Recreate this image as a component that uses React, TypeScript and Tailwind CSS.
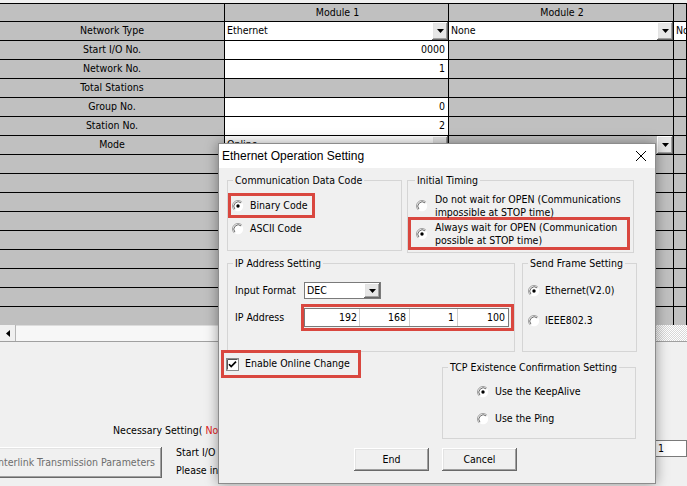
import React from 'react';

type CellData = { text?: string; white?: boolean; right?: boolean; drop?: boolean; center?: boolean };
type Row = { label: string; m1?: CellData; m2?: CellData; m3?: CellData };

const rows: Row[] = [
  {
    label: 'Network Type',
    m1: { text: 'Ethernet', white: true, drop: true },
    m2: { text: 'None', white: true, drop: true },
    m3: { text: 'None', white: true },
  },
  { label: 'Start I/O No.', m1: { text: '0000', white: true, right: true } },
  { label: 'Network No.', m1: { text: '1', white: true, right: true } },
  { label: 'Total Stations' },
  { label: 'Group No.', m1: { text: '0', white: true, right: true } },
  { label: 'Station No.', m1: { text: '2', white: true, right: true } },
  { label: 'Mode', m1: { text: 'Online', white: true, drop: true }, m2: { drop: true } },
  { label: '' },
  { label: '' },
  { label: '' },
  { label: '' },
  { label: '' },
  { label: '' },
  { label: '' },
  { label: '' },
  { label: '' },
];

const raised =
  'shadow-[inset_-1px_-1px_0_#696969,inset_1px_1px_0_#ffffff,inset_-2px_-2px_0_#a0a0a0,inset_2px_2px_0_#e3e3e3]';

const Arrow = () => (
  <svg width="7" height="4" viewBox="0 0 7 4">
    <path d="M0 0h7L3.5 4z" fill="#000" />
  </svg>
);

const DropBtn = () => (
  <span className={`flex h-full w-[16px] shrink-0 items-center justify-center bg-[#e6e6e6] ${raised}`}>
    <Arrow />
  </span>
);

const Radio = ({ on }: { on?: boolean }) => (
  <svg width="12" height="12" viewBox="0 0 12 12" className="shrink-0">
    <circle cx="6" cy="6" r="5.2" fill="#fff" />
    <path d="M2.1 9.9A5.5 5.5 0 0 1 9.9 2.1" fill="none" stroke="#a0a0a0" />
    <path d="M2.9 9.1A4.4 4.4 0 0 1 9.1 2.9" fill="none" stroke="#6b6b6b" />
    {on && <circle cx="6" cy="6" r="1.7" fill="#000" />}
  </svg>
);

const Check = () => (
  <svg width="13" height="13" viewBox="0 0 13 13" className="shrink-0">
    <rect x="0.5" y="0.5" width="12" height="12" fill="#fff" stroke="#8a8a8a" />
    <path d="M1.5 1.5v10M1.5 1.5h10" stroke="#555" />
    <path d="M3 6.2l2.2 2.4L10 3.6" fill="none" stroke="#000" strokeWidth="1.7" />
  </svg>
);

const Cell = ({ c, w }: { c?: CellData; w: string }) => (
  <div
    className={`flex h-full items-center overflow-hidden border-r border-black ${w} ${
      c?.white ? 'bg-white' : 'bg-[#c0c0c0]'
    }`}
  >
    <span
      className={`flex-1 whitespace-nowrap ${c?.right ? 'pr-[3px] text-right' : 'pl-[2px]'} ${
        c?.center ? 'pl-0 text-center' : ''
      }`}
    >
      {c?.text}
    </span>
    {c?.drop && <DropBtn />}
  </div>
);

const Grid = () => (
  <div className="mt-[3px] border-t border-black">
    <div className="flex h-[18px] border-b border-black">
      <Cell w="w-[225px] shrink-0" />
      <Cell w="w-[224px] shrink-0" c={{ text: 'Module 1', center: true }} />
      <Cell w="w-[225px] shrink-0" c={{ text: 'Module 2', center: true }} />
      <Cell w="flex-1" />
    </div>
    {rows.map((r, i) => (
      <div key={i} className={`flex ${i === rows.length - 1 ? 'h-[18px]' : 'h-[19px] border-b border-black'}`}>
        <div className="flex h-full w-[225px] shrink-0 items-center justify-center border-r border-black bg-[#c0c0c0]">
          {r.label}
        </div>
        <Cell w="w-[224px] shrink-0" c={r.m1} />
        <Cell w="w-[225px] shrink-0" c={r.m2} />
        <Cell w="flex-1" c={r.m3} />
      </div>
    ))}
  </div>
);

const ScrollBar = () => (
  <div className="flex h-[17px] border-b border-[#a0a0a0]">
    <div className="flex w-[16px] shrink-0 items-center justify-center border-r border-[#b5b5b5] bg-[#f0f0f0]">
      <svg width="4" height="7" viewBox="0 0 4 7">
        <path d="M4 0v7L0 3.5z" fill="#000" />
      </svg>
    </div>
    <div className="w-[620px] shrink-0 border-t border-[#dcdcdc] bg-[#f7f7f7]" />
    <div className="flex-1 bg-[repeating-conic-gradient(#ffffff_0_25%,#d8d8d8_0_50%)] bg-[length:2px_2px]" />
  </div>
);

const Bottom = () => (
  <div>
    <div className="mt-[82px] h-[13px] whitespace-nowrap pl-[113px] leading-[13px]">
      Necessary Setting( <span className="text-[#e02020]">No Setting</span> / Already Set )
    </div>
    <div className="mt-[3px] flex items-start">
      <button
        className={`-ml-[12px] mt-[7px] h-[31px] w-[174px] shrink-0 overflow-hidden whitespace-nowrap bg-[#f0f0f0] pr-[7px] text-right text-[#6d6d6d] ${raised}`}
      >
        Interlink Transmission Parameters
      </button>
      <div className="ml-[14px] mt-[3px] whitespace-nowrap leading-[18px]">
        <div>Start I/O No.</div>
        <div>Please input the setting items.</div>
      </div>
      <div className="ml-auto h-[17px] w-[32px] shrink-0 border border-[#7a7a7a] bg-white pl-[2px] leading-[15px]">
        1
      </div>
    </div>
  </div>
);

const Group = ({
  title,
  lx = 'ml-[5px]',
  className,
  children,
}: {
  title: string;
  lx?: string;
  className: string;
  children: React.ReactNode;
}) => (
  <fieldset className={`shrink-0 border border-[#d5d5d5] ${className}`}>
    <legend className={`px-[2px] leading-[13px] ${lx}`}>{title}</legend>
    {children}
  </fieldset>
);

const Dialog = () => (
  <div className="absolute left-[218px] top-[143px] flex h-[341px] w-[438px] flex-col border border-[#8c8c8c] bg-[#f0f0f0] shadow-[0_0_12px_rgba(0,0,0,0.4)]">
    <div className="flex h-[24px] shrink-0 items-center justify-between bg-white pl-[3px] font-[family-name:'Liberation_Sans',sans-serif] text-[12px]">
      <span>Ethernet Operation Setting</span>
      <svg className="mr-[9px]" width="10" height="10" viewBox="0 0 10 10">
        <path d="M0 0L10 10M10 0L0 10" stroke="#000" strokeWidth="1" />
      </svg>
    </div>

    <div className="mt-[6px] ml-[8px] flex h-[83px] items-start gap-[5px]">
      <Group title="Communication Data Code" className="h-[77px] w-[175px]">
        <div className="mt-[6px] flex h-[25px] w-[87px] items-center gap-[6px] border-[3px] border-[#d9473f] pl-[1px]">
          <Radio on />
          <span>Binary Code</span>
        </div>
        <div className="mt-[4px] flex h-[14px] items-center gap-[6px] pl-[4px]">
          <Radio />
          <span>ASCII Code</span>
        </div>
      </Group>
      <Group title="Initial Timing" lx="ml-[7px]" className="h-[79px] w-[227px]">
        <div className="mt-[6px] flex items-center gap-[7px] pl-[8px]">
          <Radio />
          <span className="whitespace-nowrap leading-[13px]">
            Do not wait for OPEN (Communications
            <br />
            impossible at STOP time)
          </span>
        </div>
        <div className="-mt-[2px] flex h-[33px] w-[222px] items-center gap-[7px] border-[3px] border-[#d9473f] pl-[5px] pt-[1px]">
          <Radio on />
          <span className="whitespace-nowrap leading-[13px]">
            Always wait for OPEN (Communication
            <br />
            possible at STOP time)
          </span>
        </div>
      </Group>
    </div>

    <div className="ml-[8px] flex h-[95px] items-start gap-[7px]">
      <Group title="IP Address Setting" className="h-[95px] w-[286px]">
        <div className="mt-[12px] flex h-[17px] items-center">
          <span className="w-[76px] shrink-0 pl-[7px]">Input Format</span>
          <div className="flex h-[17px] w-[77px] shrink-0 items-center border border-[#7a7a7a] bg-white">
            <span className="flex-1 pl-[2px]">DEC</span>
            <DropBtn />
          </div>
        </div>
        <div className="mt-[5px] flex items-center">
          <span className="w-[73px] shrink-0 pl-[7px]">IP Address</span>
          <div className="flex h-[27px] w-[213px] shrink-0 items-center border-[3px] border-[#d9473f]">
            <div className="flex h-[19px] w-[205px] border border-[#7a7a7a] bg-white leading-[17px]">
              <span className="w-[55px] shrink-0 border-r border-[#d0d0d0] pr-[2px] text-right">192</span>
              <span className="w-[50px] shrink-0 border-r border-[#d0d0d0] pr-[3px] text-right">168</span>
              <span className="w-[48px] shrink-0 border-r border-[#d0d0d0] pr-[3px] text-right">1</span>
              <span className="flex-1 pr-[3px] text-right">100</span>
            </div>
          </div>
        </div>
      </Group>
      <Group title="Send Frame Setting" className="h-[95px] w-[115px]">
        <div className="mt-[14px] flex h-[14px] items-center gap-[5px] pl-[5px]">
          <Radio on />
          <span>Ethernet(V2.0)</span>
        </div>
        <div className="mt-[16px] flex h-[14px] items-center gap-[5px] pl-[5px]">
          <Radio />
          <span>IEEE802.3</span>
        </div>
      </Group>
    </div>

    <div className="flex h-[87px] items-start">
      <div className="-mt-[2px] ml-[2px] flex h-[28px] w-[140px] shrink-0 items-center gap-[6px] border-[3px] border-[#d9473f] pl-[2px]">
        <Check />
        <span className="whitespace-nowrap">Enable Online Change</span>
      </div>
      <Group title="TCP Existence Confirmation Setting" className="ml-[81px] mt-[9px] h-[78px] w-[194px]">
        <div className="mt-[11px] flex h-[14px] items-center gap-[6px] pl-[34px]">
          <Radio on />
          <span>Use the KeepAlive</span>
        </div>
        <div className="mt-[13px] flex h-[14px] items-center gap-[6px] pl-[34px]">
          <Radio />
          <span>Use the Ping</span>
        </div>
      </Group>
    </div>

    <div className="mt-[9px] flex">
      <button className={`ml-[135px] h-[23px] w-[75px] bg-[#f0f0f0] ${raised}`}>End</button>
      <button className={`ml-[13px] h-[23px] w-[75px] bg-[#f0f0f0] ${raised}`}>Cancel</button>
    </div>
  </div>
);

export default function App() {
  return (
    <div className="relative h-[486px] w-[687px] overflow-hidden bg-[#f0f0f0] font-[family-name:Tahoma,'DejaVu_Sans_Condensed','Liberation_Sans',sans-serif] text-[10.5px] text-black">
      <Grid />
      <ScrollBar />
      <Bottom />
      <Dialog />
    </div>
  );
}
